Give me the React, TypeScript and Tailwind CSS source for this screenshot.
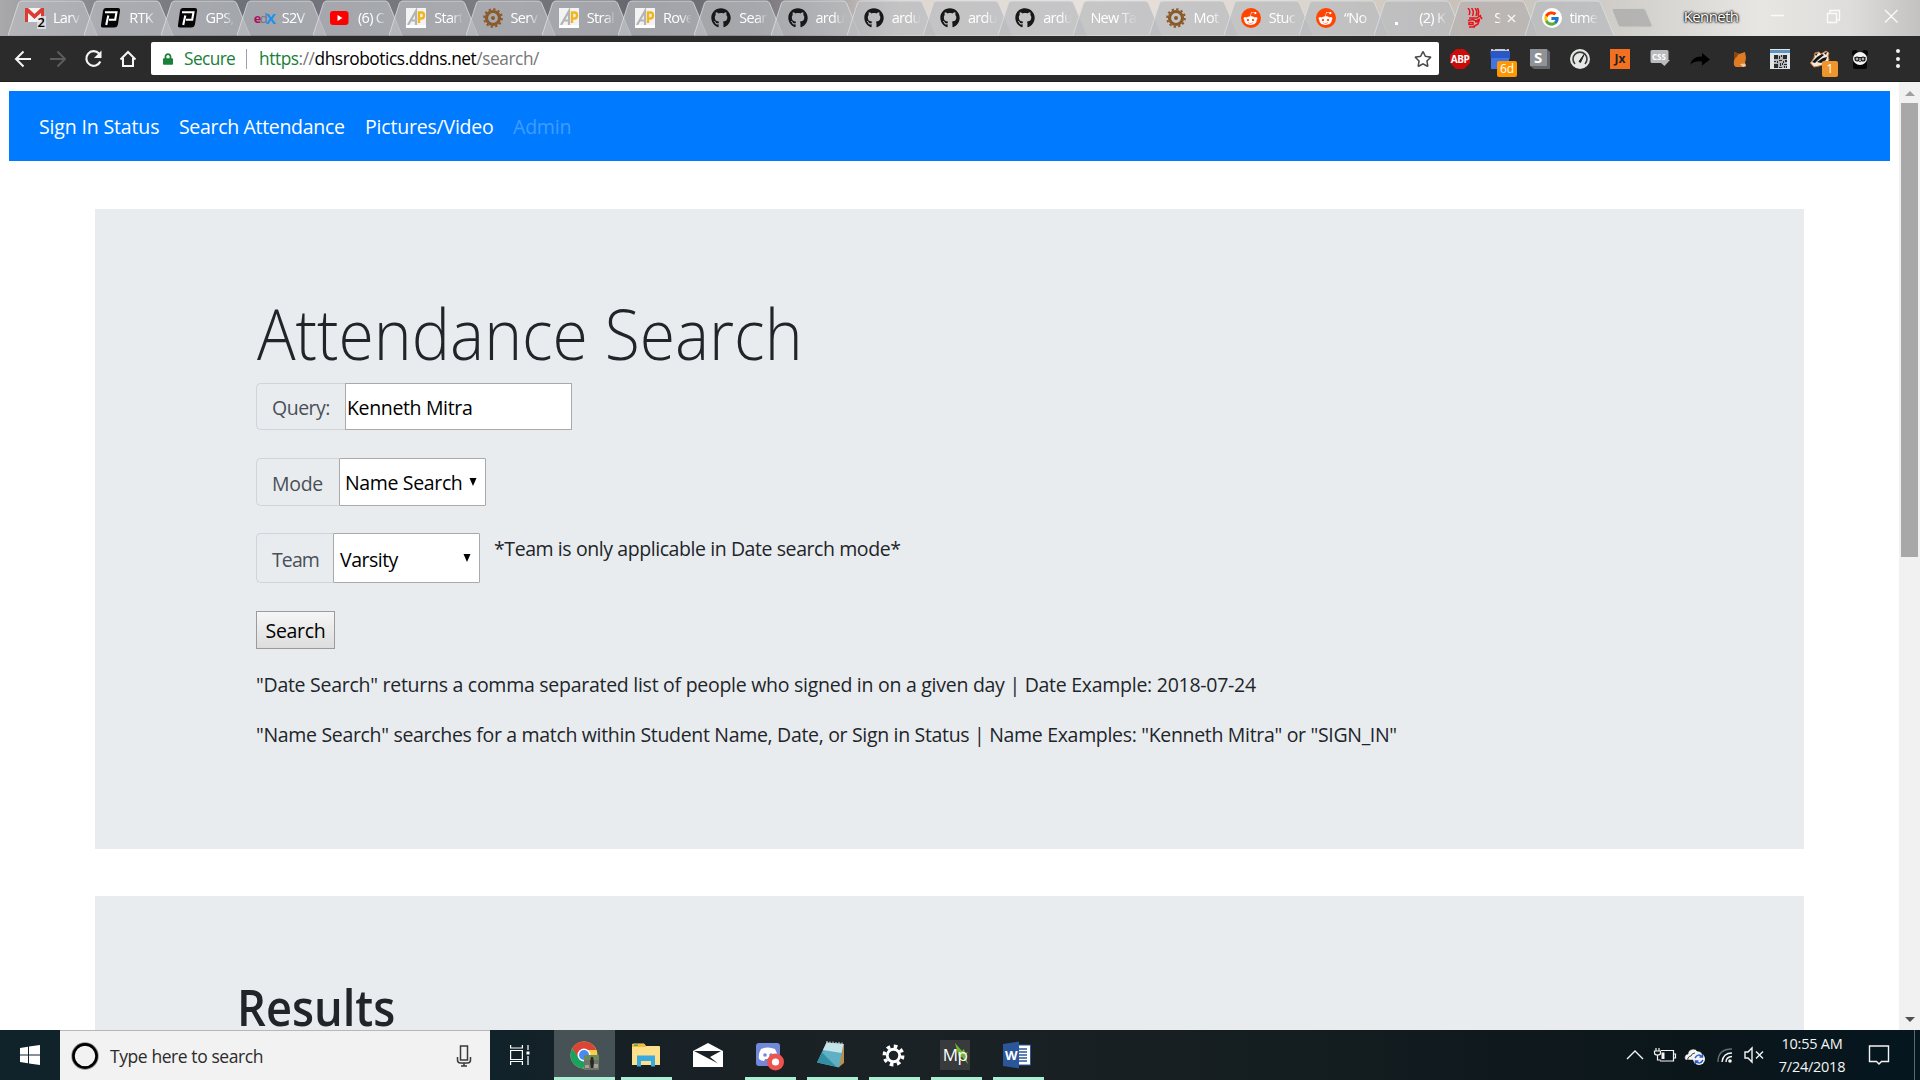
import type { ReactNode } from "react";
import { FaGithub, FaRedditAlien, FaLock, FaRegStar } from "react-icons/fa";
import { FcGoogle } from "react-icons/fc";

/* ---------- Tab favicons ---------- */

const Gmail = () => (
  <span className="relative block h-5 w-5">
    <svg viewBox="0 0 20 16" className="h-4 w-5">
      <rect width="19" height="14" fill="#f3f3f3" />
      <path d="M0 0h3l6.500 6L16 0h3v14h-3V5L9.500 11 3 5v9H0z" fill="#dc3b35" />
    </svg>
    <span className="absolute -right-[1px] top-[8px] bg-gray-200/80 px-px text-[13px] font-semibold leading-[13px] text-black">2</span>
  </span>
);
const PLogo = () => (
  <svg viewBox="0 0 20 20" className="h-5 w-5">
    <path d="M5 0h12q2.500 0 2 3l-2 13q-.5 3.500-4 3.500H2Q-.5 19.500 0 17L2 3q.5-3 3-3z" fill="#050505" />
    <path d="M4 4.200h11.500l-1.300 7.600H8M7.300 7.500L5.200 17" fill="none" stroke="#fff" strokeWidth="2.100" />
  </svg>
);
const Edx = () => (
  <span className="flex h-5 w-5 items-center text-[13px] font-bold leading-none tracking-[-1.800px]">
    <span className="text-[#b0105f]">e</span>
    <span className="font-normal text-gray-500">d</span>
    <span className="text-[15px] text-[#1593ee]">X</span>
  </span>
);
const Youtube = () => (
  <svg viewBox="0 0 20 20" className="h-5 w-5">
    <rect x="0" y="3" width="18.500" height="14" rx="3" fill="#f00" />
    <path d="M7.500 7v6l5-3z" fill="#fff" />
  </svg>
);
const ArduPilot = () => (
  <svg viewBox="0 0 20 20" className="h-5 w-5">
    <path d="M0 0h20v20H0z" fill="#f3f3f3" />
    <path d="M2 17L10 3v14M5.500 12.500H10" fill="none" stroke="#b4b4b4" strokeWidth="2.200" />
    <path d="M13 15V4.500h2.500q2.500 0 2.500 3t-2.500 3H13" fill="none" stroke="#f2b51c" strokeWidth="2.400" />
    <path d="M0 17h20v3H0z" fill="#fff" />
  </svg>
);
const Gear = () => (
  <svg viewBox="0 0 20 20" className="h-5 w-5">
    <circle cx="10" cy="10" r="8.800" fill="none" stroke="#8a5a2b" strokeWidth="2" strokeDasharray="2.300 2.300" />
    <circle cx="10" cy="10" r="6.500" fill="none" stroke="#8a5a2b" strokeWidth="3.200" />
    <circle cx="10" cy="10" r="2" fill="#8a5a2b" />
  </svg>
);
const Github = () => <FaGithub className="h-5 w-5 text-[#181818]" />;
const Reddit = () => (
  <span className="flex h-5 w-5 items-center justify-center rounded-full bg-[#ff4500]">
    <FaRedditAlien className="h-[15px] w-[15px] text-white" />
  </span>
);
const Dot = () => (
  <span className="flex h-5 w-5 items-end pb-[3px] pl-1">
    <span className="h-[3px] w-[3px] bg-white" />
  </span>
);
const Heat = () => (
  <svg viewBox="0 0 20 20" className="h-5 w-5" fill="none" stroke="#e8141c" strokeWidth="1.500">
    <path d="M2 0q3 3 1 7M5.500 0q3 3 1 8M9 0q3 3 1 8M11.500 0q2 3 .5 8" />
    <path d="M3 10h8l4-3M2 12.500l5-1 3 1.500 4-2M3 14.500h4v2H3zM9 14l4-1-1 3-5 3M3 19h6M14 8l2 3" />
  </svg>
);
const Google = () => (
  <span className="flex h-5 w-5 items-center justify-center rounded-full bg-white">
    <FcGoogle className="h-[17px] w-[17px]" />
  </span>
);

type TabData = { label: string; icon?: () => ReactNode; active?: boolean };
const tabs: TabData[] = [
  { label: "Larv", icon: Gmail },
  { label: "RTK", icon: PLogo },
  { label: "GPS,", icon: PLogo },
  { label: "S2V", icon: Edx },
  { label: "(6) C", icon: Youtube },
  { label: "Start", icon: ArduPilot },
  { label: "Serv", icon: Gear },
  { label: "Stral", icon: ArduPilot },
  { label: "Rove", icon: ArduPilot },
  { label: "Sear", icon: Github },
  { label: "ardu", icon: Github },
  { label: "ardu", icon: Github },
  { label: "ardu", icon: Github },
  { label: "ardu", icon: Github },
  { label: "New Tab" },
  { label: "Mot", icon: Gear },
  { label: "Stuc", icon: Reddit },
  { label: "“No", icon: Reddit },
  { label: "(2) K", icon: Dot },
  { label: "S", icon: Heat, active: true },
  { label: "time", icon: Google },
];

function Tab({ tab, wide }: { tab: TabData; wide: boolean }) {
  const Icon = tab.icon;
  return (
    <div className={`relative flex h-9 shrink-0 items-center pl-[17px] ${wide ? "w-[76.250px]" : "w-[75.200px]"}`}>
      <svg viewBox="0 0 90 36" className="absolute left-0 top-0 h-9 w-[90px]">
        <path
          d="M0 35.500L10.500 3Q11.500 1 14 1H72Q74.500 1 75.500 3L89 35.500z"
          fill={tab.active ? "rgba(185,181,178,.9)" : "rgba(184,187,191,.72)"}
        />
        <path d="M0 35.500L10.500 3Q11.500 1 14 1H72Q74.500 1 75.500 3L89 35.500" fill="none" stroke="rgba(225,225,225,.75)" strokeWidth="1" />
      </svg>
      <div className="relative flex h-9 items-center gap-[8px]">
        {Icon && <Icon />}
        <span
          className={`block overflow-hidden whitespace-nowrap text-[14.500px] leading-5 tracking-[-0.700px] text-white [mask-image:linear-gradient(to_right,black_60%,transparent)] ${
            Icon ? (tab.active ? "w-[7px]" : "w-[29px]") : "w-[48px]"
          }`}
        >
          {tab.label}
        </span>
        {tab.active && (
          <svg viewBox="0 0 10 10" className="ml-[-2px] h-[9px] w-[9px]">
            <path d="M1 1l8 8M9 1L1 9" stroke="#f4f4f4" strokeWidth="1.600" />
          </svg>
        )}
      </div>
    </div>
  );
}

function TabStrip() {
  return (
    <div className="flex h-9 w-full items-center overflow-hidden bg-[linear-gradient(to_right,#a9a9ac_0,#85868c_100px,#6e7079_250px,#7b7b82_480px,#66676e_640px,#77767b_760px,#a39f9f_830px,#ded6d1_900px,#e9e1dc_1100px,#ddd6cf_1300px,#c8c2bb_1450px,#cbc7c2_1560px,#d5d3cf_1650px,#e7e6e3_1760px,#dedddb_1850px,#c4c2c1_1920px)] pl-2">
      {tabs.map((t, i) => (
        <Tab key={i} tab={t} wide={i < 12} />
      ))}
      <svg viewBox="0 0 44 22" className="ml-[11px] h-[22px] w-11 shrink-0">
        <path d="M3 1.500H32Q34 1.500 35 4L41 18Q42 20 39 20H10Q8 20 7 18L1.500 4Q.5 1.500 3 1.500z" fill="rgba(170,170,168,.75)" stroke="#cfcecc" />
      </svg>
      <span className="mb-1 ml-[29px] w-[52px] shrink-0 text-[15px] leading-5 tracking-[-0.600px] text-white [text-shadow:0_0_2px_#000,0_0_2px_#000,0_0_3px_#000]">
        Kenneth
      </span>
      <svg viewBox="0 0 130 16" className="mb-1 ml-[34px] h-4 w-[130px] shrink-0" fill="none" stroke="#fafafa" strokeWidth="1.300">
        <path d="M1 7.500h13M57.500 5.500h9v9h-9zM60 5V2.500h9.500V12H67M115 2l12.500 12.500M127.500 2L115 14.500" />
      </svg>
    </div>
  );
}

/* ---------- Toolbar extensions ---------- */

const Badge = ({ children, wide }: { children: ReactNode; wide?: boolean }) => (
  <span
    className={`absolute top-[12px] flex h-[16px] items-center justify-center rounded-[2px] text-[12px] leading-none text-white ${
      wide ? "left-[7px] w-[20px] bg-[#ff9800]" : "left-[12px] w-[16px] bg-[#ee962c]"
    }`}
  >
    {children}
  </span>
);

const extensions: ReactNode[] = [
  <span className="relative flex h-5 w-5 items-center justify-center">
    <svg viewBox="0 0 20 20" className="absolute h-5 w-5">
      <path d="M6 0h8l6 6v8l-6 6H6l-6-6V6z" fill="#cb0a0a" />
    </svg>
    <span className="relative text-[10px] font-bold leading-none tracking-[-0.400px] text-white">ABP</span>
  </span>,
  <span className="relative block h-5 w-5">
    <svg viewBox="0 0 20 20" className="h-5 w-5">
      <path d="M1 0h18v3H1z" fill="#c9cbcf" />
      <path d="M3 0h2v1H3zM15 0h2v1h-2z" fill="#555" />
      <path d="M0 2h20v8H1z" fill="#2a56c6" />
      <path d="M1 9h18v11H1z" fill="#3f74e4" />
    </svg>
    <Badge wide>6d</Badge>
  </span>,
  <span className="relative block h-5 w-5">
    <svg viewBox="0 0 20 20" className="absolute h-5 w-5">
      <path d="M0 0h17l3 3v17H4l-4-3z" fill="#63666a" />
      <path d="M0 0h17v17H0z" fill="#8f9296" />
    </svg>
    <span className="absolute left-[4px] top-0 text-[15px] font-bold leading-[17px] text-white">S</span>
  </span>,
  <svg viewBox="0 0 20 20" className="h-5 w-5">
    <circle cx="10" cy="10" r="10" fill="#e6e8e6" />
    <path d="M5 15a7 7 0 1 1 10 0" fill="none" stroke="#3a3a3a" strokeWidth="1.600" />
    <path d="M9 12.500l5-7-3.500 8z" fill="#222" stroke="#222" />
  </svg>,
  <span className="flex h-5 w-5 items-center justify-center bg-[#f37021] text-[12px] font-bold leading-none text-[#222]">Jx</span>,
  <span className="relative block h-5 w-5">
    <svg viewBox="0 0 20 20" className="absolute h-5 w-5">
      <path d="M2 1h15q1.500 0 1.500 1.500V11H20l-5.500 6L11 14H2Q.5 14 .5 12.500v-10Q.5 1 2 1z" fill="#b9bbbc" />
    </svg>
    <span className="absolute left-[2px] top-[3px] text-[8px] font-bold leading-[9px] text-white">CSS</span>
  </span>,
  <svg viewBox="0 0 20 20" className="h-5 w-5">
    <path d="M0 16Q2 7 12 7.500V4l8 6.500-8 6v-4Q4 11.500 0 16z" fill="#000" />
  </svg>,
  <svg viewBox="0 0 20 20" className="h-5 w-5">
    <path d="M4 3l3 1 2 1 6-2 1 6-1 5 1 3-2 1H6q-3-1-2-6l1-4z" fill="#e07b25" />
    <path d="M4 3l5 1.500-2 3-3 3z" fill="#8c4311" />
    <path d="M10 15l5-.5 1 2.500-3 1z" fill="#f4c9a0" />
  </svg>,
  <svg viewBox="0 0 20 20" className="h-5 w-5">
    <path d="M0 0h20v20H0z" fill="#dfe6ea" />
    <path d="M0 1h20v3H0z" fill="#5e93bd" />
    <path d="M4 6h13v13H4z" fill="#b4b6b8" />
    <path
      d="M4 6h4v4H4zM13 6h4v4h-4zM4 15h4v4H4zM9 7h1v3H9zM11 6h1v2h-1zM9 11h3v1H9zM4 12h2v1H4zM7 12h1v2H7zM13 12h1v2h-1zM15 11h2v2h-2zM10 14h1v3h-1zM12 14h1v2h-1zM14 15h3v1h-3zM9 18h3v1H9zM14 17h1v2h-1zM16 17h1v2h-1z"
      fill="#2b2b2b"
    />
  </svg>,
  <span className="relative block h-5 w-5">
    <svg viewBox="0 0 20 20" className="h-5 w-5">
      <path d="M.5 14L4 9l1-5 4-1 2 2 5-3 3 2-1 3 1 4-4 4-6 2-5 1z" fill="#f2e9e0" stroke="#d9803c" />
      <path d="M2 13l5-5 5-3 2 1-6 5-3 3zM7 13l6-4 4-1-1 3-5 3zM14 4l3-1-1 3zM5 5l3-1-2 3z" fill="#151515" />
    </svg>
    <Badge>1</Badge>
  </span>,
  <svg viewBox="0 0 20 20" className="h-5 w-5">
    <circle cx="5" cy="4" r="3" fill="#060606" />
    <circle cx="15" cy="4" r="3" fill="#060606" />
    <rect x="3" y="11" width="14" height="9" rx="2" fill="#060606" />
    <ellipse cx="10" cy="9.500" rx="7" ry="6.500" fill="#f5f5f5" />
    <path d="M4.500 8.500h11" stroke="#111" />
    <circle cx="7" cy="10" r="2" fill="#aaa" stroke="#111" strokeWidth="1.200" />
    <circle cx="13" cy="10" r="2" fill="#aaa" stroke="#111" strokeWidth="1.200" />
    <path d="M9 12h2l-1 1.500z" fill="#111" />
  </svg>,
];

function Toolbar() {
  return (
    <div className="flex h-[46px] w-full items-center border-b border-[#1d1d1d] bg-[#2b2b2b]">
      <svg viewBox="0 0 151 46" className="h-[46px] w-[151px] shrink-0" fill="none" strokeWidth="2">
        <path d="M31 23H16.500M23.500 15.500L16 23l7.500 7.500" stroke="#f5f5f5" />
        <path d="M50 23h14.500M57.500 15.500L65 23l-7.500 7.500" stroke="#5c5c5c" />
        <path d="M99 17.500a7.300 7.300 0 1 0 1.300 8" stroke="#f5f5f5" strokeWidth="2.200" />
        <path d="M101.500 14.500v7.500H94z" fill="#f5f5f5" />
        <path d="M120.500 23.500L128 16l7.500 7.500M123 22v8h10v-8" stroke="#f5f5f5" />
      </svg>
      <div className="flex h-[33px] w-[1288px] shrink-0 items-center rounded-[2px] bg-white pl-3 text-[17.300px] leading-[33px]">
        <FaLock className="h-[14px] w-[10px] text-[#188038]" />
        <span className="ml-[11px] w-[62px] tracking-[-0.600px] text-[#188038]">Secure</span>
        <span className="h-5 w-px bg-gray-400" />
        <span className="ml-[12px] tracking-[-0.430px] text-[#777]">
          <span className="text-[#188038]">https</span>://<span className="text-black">dhsrobotics.ddns.net</span>/search/
        </span>
        <FaRegStar className="ml-auto mr-[7px] h-[18px] w-[18px] text-[#4a4a4a]" />
      </div>
      <div className="ml-[11px] flex gap-5">
        {extensions.map((e, i) => (
          <div key={i} className="h-5 w-5">
            {e}
          </div>
        ))}
      </div>
      <div className="ml-[26px] flex flex-col gap-[3.500px]">
        <span className="h-1 w-1 rounded-full bg-gray-100" />
        <span className="h-1 w-1 rounded-full bg-gray-100" />
        <span className="h-1 w-1 rounded-full bg-gray-100" />
      </div>
    </div>
  );
}

/* ---------- Page ---------- */

const Label = ({ children, width }: { children: ReactNode; width: string }) => (
  <div className={`flex items-center rounded-l-[5px] border border-r-0 border-[#ced4da] pl-[15px] pt-[3px] text-[#495057] ${width}`}>{children}</div>
);

const Arrow = () => (
  <svg viewBox="0 0 8 8" className="h-2 w-2">
    <path d="M.5 0h7L4 8z" fill="#000" />
  </svg>
);

function SearchPanel() {
  return (
    <section className="h-[640px] bg-[#e9ecef] pl-[161px] pt-[83px] text-[19.500px] leading-[30px] tracking-[-0.300px] text-[#212529]">
      <h1 className="h-[91px] w-fit origin-left scale-x-[0.925] whitespace-nowrap pl-px text-[69.500px] font-light leading-[83px] tracking-normal">
        Attendance Search
      </h1>
      <div className="flex h-[47px]">
        <Label width="w-[89px] tracking-[-0.500px]">Query:</Label>
        <div className="flex w-[227px] items-center border border-[#a9a9a9] bg-white pl-px pt-[3px] tracking-[-0.350px] text-black">Kenneth Mitra</div>
      </div>
      <div className="mt-7 flex h-12">
        <Label width="w-[83px]">Mode</Label>
        <div className="flex w-[147px] items-center justify-between rounded-[1px] border border-[#a9a9a9] bg-white pl-[5px] pr-2 text-black">
          <span className="pt-[2px] tracking-[-0.350px]">Name Search</span>
          <Arrow />
        </div>
      </div>
      <div className="mt-[27px] flex h-[50px]">
        <Label width="w-[77px] tracking-[-0.900px]">Team</Label>
        <div className="flex w-[147px] items-center justify-between rounded-[1px] border border-[#a9a9a9] bg-white pl-[6px] pr-2 text-black">
          <span className="pt-[3px] tracking-[-0.500px]">Varsity</span>
          <Arrow />
        </div>
        <span className="ml-[14px] pt-px tracking-[-0.420px]">*Team is only applicable in Date search mode*</span>
      </div>
      <div className="mt-7 flex h-[38px] w-[79px] items-center justify-center border border-[#9b9b9b] bg-gradient-to-b from-[#f6f6f6] to-[#dddddd] pt-[2px] text-black">
        Search
      </div>
      <p className="mt-[21px] whitespace-nowrap tracking-[-0.270px]">
        "Date Search" returns a comma separated list of people who signed in on a given day | Date Example: 2018-07-24
      </p>
      <p className="mt-5 whitespace-nowrap tracking-[-0.320px]">
        "Name Search" searches for a match within Student Name, Date, or Sign in Status | Name Examples: "Kenneth Mitra" or "SIGN_IN"
      </p>
    </section>
  );
}

function Page() {
  return (
    <div className="flex h-[948px] w-full overflow-hidden bg-white">
      <main className="w-[1899px] pl-[9px] pt-[9px]">
        <nav className="flex h-[70px] w-[1881px] items-center gap-5 bg-[#007bff] pl-[30px] pt-[2px] text-[19.500px] text-white">
          <span className="w-[120px] whitespace-nowrap tracking-[-0.150px]">Sign In Status</span>
          <span className="w-[166px] whitespace-nowrap tracking-[-0.320px]">Search Attendance</span>
          <span className="w-[128px] whitespace-nowrap tracking-[-0.200px]">Pictures/Video</span>
          <span className="tracking-[-0.200px] text-[#409cff]">Admin</span>
        </nav>
        <div className="ml-[86px] mt-12 flex w-[1709px] flex-col gap-[47px]">
          <SearchPanel />
          <section className="h-[200px] bg-[#e9ecef] pl-[142px] pt-[77px]">
            <h2 className="w-fit origin-left scale-x-[0.905] text-[50px] font-semibold leading-[68px] text-[#212529]">Results</h2>
          </section>
        </div>
      </main>
      <div className="flex w-[21px] shrink-0 flex-col items-center bg-[#f1f1f1] pt-[9px]">
        <svg viewBox="0 0 10 5" className="h-[5px] w-[10px]">
          <path d="M5 0l5 5H0z" fill="#a0a0a0" />
        </svg>
        <div className="mt-[7px] h-[454px] w-[17px] bg-[#a8a8a8]" />
        <svg viewBox="0 0 10 5" className="mb-2 mt-auto h-[5px] w-[10px]">
          <path d="M5 5l5-5H0z" fill="#505050" />
        </svg>
      </div>
    </div>
  );
}

/* ---------- Taskbar ---------- */

const ChromeIcon = () => (
  <svg viewBox="0 0 30 30" className="h-[30px] w-[30px]">
    <circle cx="14" cy="14" r="13.500" fill="#f9cf48" />
    <path d="M2.300 7.200A13.500 13.500 0 0 1 25.700 7.500L26.500 9H14L8 17z" fill="#dc4437" />
    <path d="M2.300 7.200L9 17.500l8 3-4 7A13.500 13.500 0 0 1 2.300 7.200z" fill="#1aa260" />
    <circle cx="14" cy="14" r="6.500" fill="#fff" />
    <circle cx="14" cy="14" r="5" fill="#4a8af4" />
    <path d="M14 14h15v15H14z" fill="#6f7468" />
    <path d="M14 14h15v5H14z" fill="#6c8a5c" />
    <path d="M21 16h2l1 5-1 6h-2l-1-6z" fill="#2b2725" />
    <path d="M15 24h4v3h-4zM24 23h4v4h-4z" fill="#a0a39b" />
  </svg>
);
const Explorer = () => (
  <svg viewBox="0 0 28 24" className="mr-px h-6 w-7">
    <path d="M0 2Q0 .5 1.500.5H12L14 3h13q1 0 1 1v18H0z" fill="#fde08c" />
    <path d="M0 1h12l2 3H0z" fill="#f5bd35" />
    <path d="M2 1.500h4v1.500H2z" fill="#4fa85c" />
    <path d="M5 23.500V12.500h18v11h-4V18H9v5.500z" fill="#39a9e0" />
  </svg>
);
const Mail = () => (
  <svg viewBox="0 0 30 24" className="mr-[2px] h-6 w-[30px]">
    <path d="M0 8L15 0l15 8v16H0z" fill="#fff" />
    <path d="M1 8h27L17 14l8 6.500L5 10z" fill="#1a2226" />
  </svg>
);
const Discord = () => (
  <svg viewBox="0 0 28 28" className="mr-px mt-[3px] h-7 w-7">
    <rect width="24" height="23" rx="3" fill="#7289da" />
    <path d="M5 6q7-3 14 0 3 5 2 10-3 2-5 2l-1-2h-6l-1 2q-3 0-5-2-1-5 2-10z" fill="#fff" />
    <circle cx="9" cy="12" r="1.800" fill="#7289da" />
    <circle cx="15" cy="12" r="1.800" fill="#7289da" />
    <circle cx="19.500" cy="19" r="8.500" fill="#ef5350" />
    <circle cx="19.500" cy="19" r="3.600" fill="#fff" />
  </svg>
);
const Notepad = () => (
  <svg viewBox="0 0 28 28" className="mr-[3px] h-7 w-7">
    <path d="M10 2l17 1v19l-5 4z" fill="#b98f4e" />
    <path d="M9.500 1.500l17 1.500L22 26.500 0 21.500z" fill="#5fb0c2" />
    <path d="M9.500 1.500l17 1.500-2 9L6 9z" fill="#c3e4eb" />
    <path d="M0 21.500l5-10 14 14z" fill="#338fa5" />
    <path d="M10 0v3M13 .5v3M16 .5v3M19 1v3M22 1v3M25 1.500v3" stroke="#d8d8d8" />
  </svg>
);
const Settings = () => (
  <svg viewBox="0 0 24 24" className="mr-[3px] h-[23px] w-[23px]" fill="none" stroke="#fff">
    <circle cx="12" cy="12" r="6.500" strokeWidth="3" />
    <circle cx="12" cy="12" r="9.600" strokeWidth="3.600" strokeDasharray="3.770 3.770" />
  </svg>
);
const Mp = () => (
  <span className="relative mr-[3px] flex h-[30px] w-[30px] items-center justify-center bg-[#393a3b]">
    <svg viewBox="0 0 30 30" className="absolute h-[30px] w-[30px]">
      <path d="M15 3l7 8 1-1 1-1 1 4 3-1-3 4 1 2 2 6-6-7-3 1z" fill="#6fb53a" />
    </svg>
    <span className="relative text-[17px] tracking-[-0.500px] text-white">Mp</span>
  </span>
);
const Word = () => (
  <span className="relative mr-[3px] flex h-7 w-7">
    <svg viewBox="0 0 28 28" className="absolute h-7 w-7">
      <path d="M15 4h12.500v20H15z" fill="#fff" stroke="#2b579a" />
      <path d="M16 8h8M16 11h8M16 14h8M16 17h8M16 20h8" stroke="#2b579a" strokeWidth="1.400" />
      <path d="M0 3L16 .5v27L0 25z" fill="#2b579a" />
    </svg>
    <span className="relative pl-[2px] text-[13px] font-bold leading-7 text-white">W</span>
  </span>
);

const apps: { icon: ReactNode; open: boolean }[] = [
  { icon: <Explorer />, open: true },
  { icon: <Mail />, open: false },
  { icon: <Discord />, open: true },
  { icon: <Notepad />, open: true },
  { icon: <Settings />, open: true },
  { icon: <Mp />, open: true },
  { icon: <Word />, open: true },
];

function Taskbar() {
  return (
    <div className="flex h-[50px] w-full bg-[linear-gradient(to_right,#10222a_0,#10222a_490px,#172025_620px,#1b2225_900px,#141d20_1300px,#0b161b_1700px,#05161f_1920px)]">
      <div className="flex w-[60px] items-center justify-center">
        <svg viewBox="0 0 20 20" className="h-5 w-5" fill="#fff">
          <path d="M0 3l8-1.200v7.700H0zM9 1.600L20 0v9.500H9zM0 10.500h8v7.700L0 17zM9 10.500h11V20L9 18.400z" />
        </svg>
      </div>
      <div className="flex w-[430px] items-center border-t border-[#b8b8b8] bg-[#f2f2f2] pl-[11px]">
        <svg viewBox="0 0 28 28" className="h-7 w-7" fill="none">
          <circle cx="14" cy="14" r="12" stroke="#8a8a8a" strokeWidth="3.400" />
          <circle cx="14" cy="14" r="11.600" stroke="#000" strokeWidth="2.600" />
        </svg>
        <span className="ml-[11px] pt-px text-[17.500px] tracking-[-0.420px] text-[#2b2b2b]">Type here to search</span>
        <svg viewBox="0 0 16 22" className="ml-auto mr-[18px] h-[22px] w-4" fill="none" stroke="#3a3a3a" strokeWidth="1.500">
          <path d="M4.500 1h7v14h-7zM1.500 12v3q0 3 3 3h7q3 0 3-3v-3M8 18v3M5 21h6" />
        </svg>
      </div>
      <div className="flex w-16 items-center pl-5">
        <svg viewBox="0 0 20 20" className="h-5 w-5" fill="none" stroke="#fff" strokeWidth="1.200">
          <path d="M.6 0v3h11.800V0M.6 5.500h11.800v9H.6zM.6 20v-3.500h11.800V20M18 0v5M18 11v9" />
          <path d="M16.500 6.500h3v3h-3z" fill="#fff" stroke="none" />
        </svg>
      </div>
      <div className="flex w-[61px] items-center justify-center border-b-[3px] border-[#a9f0d2] bg-[#475256] pt-[5px]">
        <ChromeIcon />
      </div>
      <div className="ml-[6px] flex gap-[11px]">
        {apps.map((a, i) => (
          <div key={i} className={`flex h-[50px] w-[51px] items-center justify-center border-b-[3px] pt-[3px] ${a.open ? "border-[#a9f0d2]" : "border-transparent"}`}>
            {a.icon}
          </div>
        ))}
      </div>
      <svg viewBox="0 0 140 50" className="ml-auto h-[50px] w-[140px]" fill="none" stroke="#f4f4f4" strokeWidth="1.400">
        <path d="M2 29l8-8 8 8" />
        <path d="M36 20.500h12.500v10.500H35M49 24h1.500v4H49M31 18v3M34 18v3M29.500 21h6v2q0 2-3 2-3 0-3-2zM32.500 25v5h3" strokeWidth="1.200" />
        <path d="M36.500 22.500h3v6.500h-3z" fill="#f4f4f4" stroke="none" />
        <path d="M61 30q-2-1-1-4 1-2 3-2 0-4 5-5 3 0 4 2 4 0 5 3v6z" fill="#f4f4f4" stroke="#0b161b" strokeWidth=".5" />
        <path d="M64 32q-2-1-1-4 1-2 3-2 1-3 4-3" stroke="#0b161b" strokeWidth=".8" />
        <circle cx="74" cy="29" r="6" fill="#f4f4f4" stroke="none" />
        <path d="M70 28q3-5 7-1.500M78 30q-3 5-7 1.500M77.500 24v3h-3M70.500 34v-3h3" stroke="#2a5fc4" strokeWidth="1.500" />
        <path d="M93 32q0-13 14-13" stroke="#666e72" />
        <path d="M97 32q1-9 10-9M101 32q0-5 6-5.500" />
        <circle cx="105" cy="31" r="1.800" fill="#f4f4f4" stroke="none" />
        <path d="M120 22h3l4-4v14l-4-4h-3zM131 21.500l7 7M138 21.500l-7 7" />
      </svg>
      <div className="ml-[5px] flex w-[84px] flex-col items-center pt-[2px] text-[14.500px] leading-[23px] tracking-[-0.250px] text-[#f4f4f4]">
        <span>10:55 AM</span>
        <span>7/24/2018</span>
      </div>
      <svg viewBox="0 0 22 20" className="ml-[14px] mt-[15px] h-5 w-[22px]" fill="none" stroke="#f4f4f4" strokeWidth="1.400">
        <path d="M1.500 1h19v15.500h-7L11 19l-2.500-2.500h-7z" />
      </svg>
      <div className="ml-[24px] mr-[5px] w-px bg-[#5b6870]" />
    </div>
  );
}

export default function App() {
  return (
    <div className="flex h-[1080px] w-[1920px] flex-col overflow-hidden font-['Open_Sans','Noto_Sans',sans-serif]">
      <TabStrip />
      <Toolbar />
      <Page />
      <Taskbar />
    </div>
  );
}
